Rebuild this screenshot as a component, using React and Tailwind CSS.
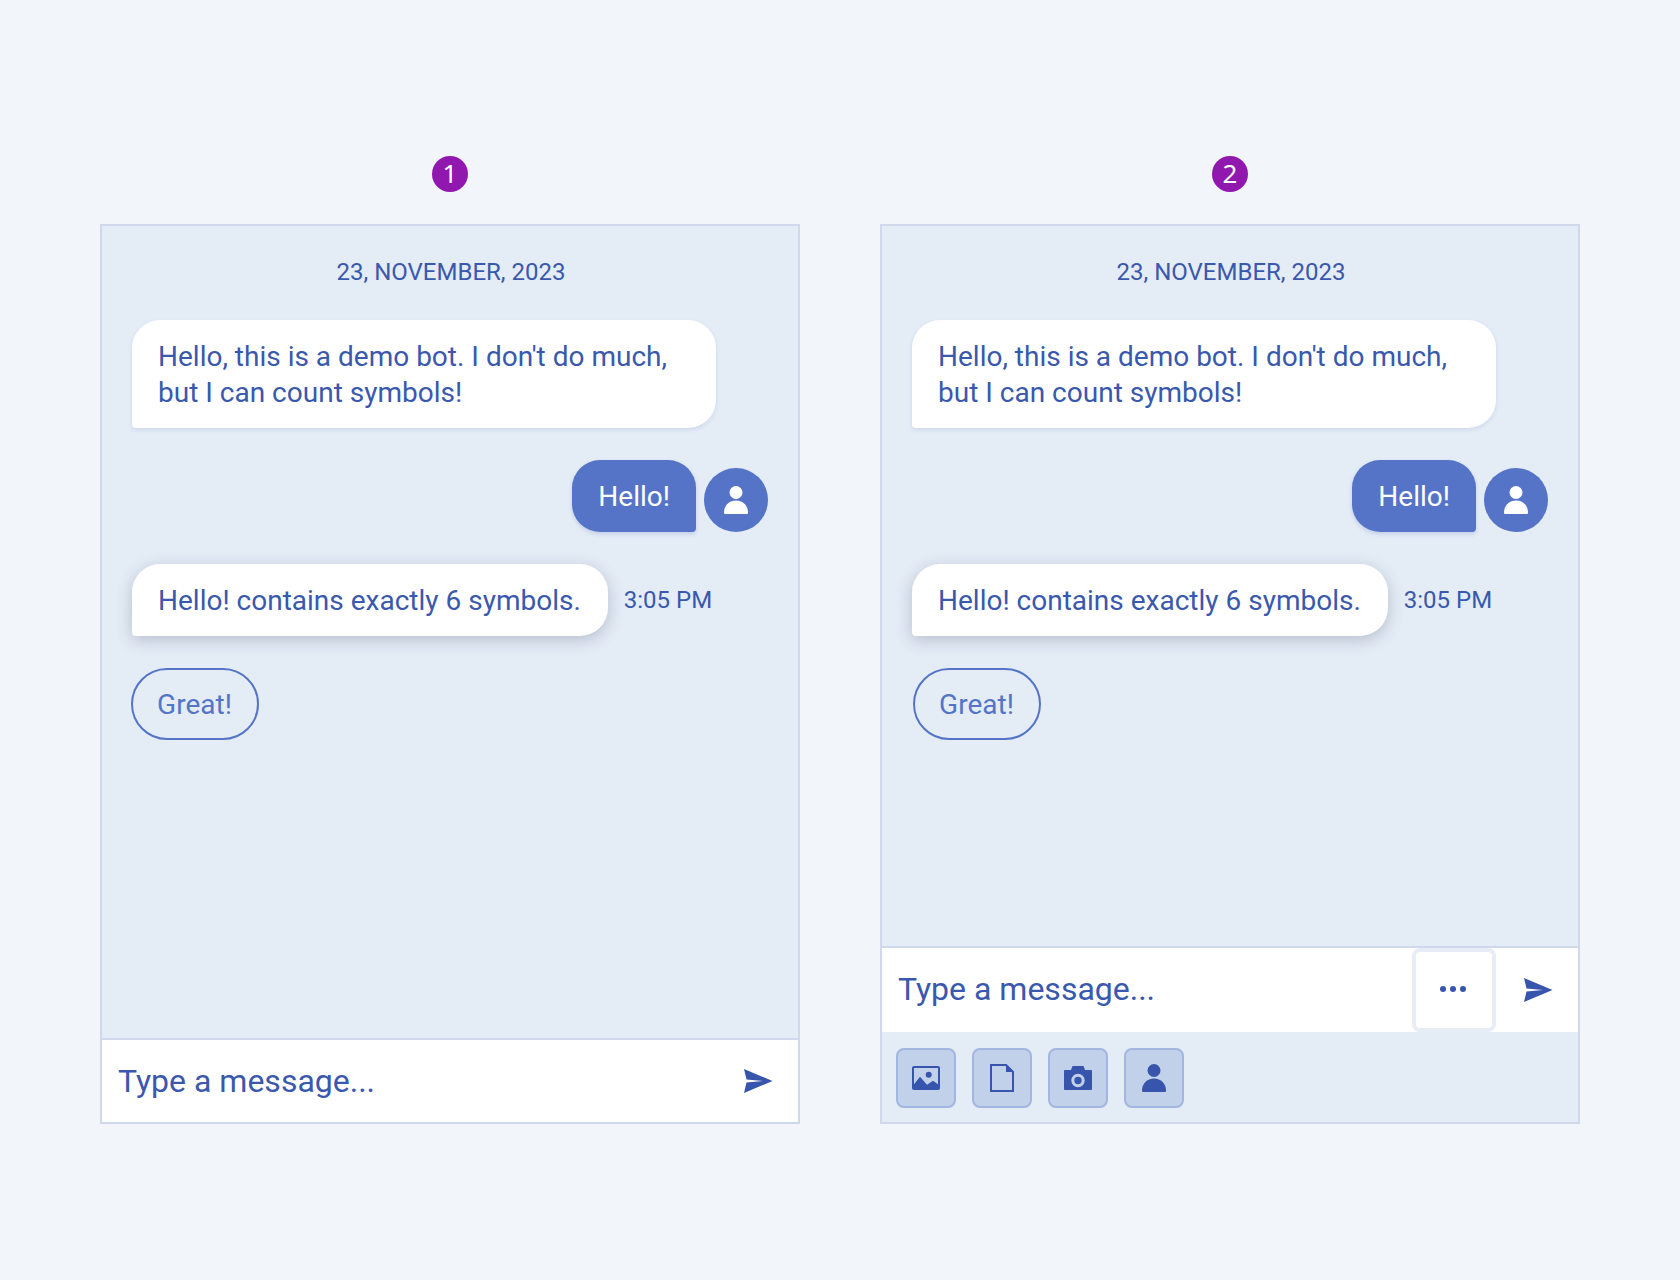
function SendIcon() {
  return (
    <svg width="28" height="24" viewBox="0 0 28 24" className="shrink-0 overflow-visible">
      <path d="M0 0L28.5 12L0 24L2.5 13.5L19 12L2.5 10.5Z" fill="#3755ad" />
    </svg>
  )
}

function PersonIcon({ color }) {
  return (
    <svg width="24" height="28" viewBox="0 0 24 28">
      <circle cx="12" cy="6.5" r="6.5" fill={color} />
      <path d="M0 26.5C0 19.5 5 14.5 12 14.5C19 14.5 24 19.5 24 26.5C24 27.5 23.5 28 22.5 28H1.5C0.5 28 0 27.5 0 26.5Z" fill={color} />
    </svg>
  )
}

function ImageIcon() {
  return (
    <svg width="28" height="24" viewBox="0 0 28 24">
      <rect x="1" y="1" width="26" height="22" rx="1" fill="none" stroke="#3755ad" strokeWidth="2" />
      <circle cx="16.7" cy="8.7" r="3" fill="#3755ad" />
      <path d="M1 19.5L8 10.7L15 18.7L21 14.7L27 19V23H1Z" fill="#3755ad" />
    </svg>
  )
}

function FileIcon() {
  return (
    <svg width="24" height="28" viewBox="0 0 24 28">
      <path d="M1 1H16L23 8V27H1Z" fill="none" stroke="#3755ad" strokeWidth="2" />
      <path d="M16 0L24 8H16Z" fill="#3755ad" />
    </svg>
  )
}

function CameraIcon() {
  return (
    <svg width="28" height="24" viewBox="0 0 28 24">
      <path d="M1 4H7L8.5 0H19.5L21 4H27C27.6 4 28 4.4 28 5V23C28 23.6 27.6 24 27 24H1C0.4 24 0 23.6 0 23V5C0 4.4 0.4 4 1 4Z" fill="#3755ad" />
      <circle cx="14" cy="14.5" r="5.2" fill="none" stroke="#c2d1ea" strokeWidth="3" />
    </svg>
  )
}

function ActionButton({ children }) {
  return (
    <button className="flex h-[60px] w-[60px] items-center justify-center rounded-lg border-2 border-[#a3b6df] bg-[#c2d1ea]">
      {children}
    </button>
  )
}

function ChatPanel({ number, withActions }) {
  return (
    <div className="flex w-[700px] flex-col items-center">
      <div className="mb-8 flex h-9 w-9 items-center justify-center rounded-full bg-[#9118ae] pb-0.5 font-['Noto_Sans',sans-serif] text-[26px] leading-none text-white">
        {number}
      </div>
      <div className="flex h-[900px] w-full flex-col border-2 border-[#d0d8ec] bg-[#e4ecf6] font-['Roboto',sans-serif] text-[#3a58ad]">
        <div className="flex flex-1 flex-col gap-8 px-[30px] pt-[30px]">
          <div className="pl-0.5 text-center text-2xl leading-8">23, NOVEMBER, 2023</div>

          <div className="w-[584px] rounded-[28px] rounded-bl-[4px] bg-white px-[26px] pt-[19px] pb-[17px] text-[28px] leading-9 shadow-[0_2px_4px_rgba(55,85,173,0.12)]">
            Hello, this is a demo bot. I don't do much, but I can count symbols!
          </div>

          <div className="flex items-end justify-end gap-2">
            <div className="rounded-[28px] rounded-br-[4px] bg-[#5574c8] px-[26px] pt-[19px] pb-[17px] text-[28px] leading-9 text-white shadow-[0_2px_4px_rgba(55,85,173,0.2)]">
              Hello!
            </div>
            <div className="flex h-16 w-16 items-center justify-center rounded-full bg-[#5574c8]">
              <PersonIcon color="#ffffff" />
            </div>
          </div>

          <div className="flex items-center gap-4">
            <div className="rounded-[28px] rounded-bl-[4px] bg-white pt-[19px] pr-[27px] pb-[17px] pl-[26px] text-[28px] leading-9 shadow-[0_4px_16px_rgba(50,60,90,0.26)]">
              Hello! contains exactly 6 symbols.
            </div>
            <span className="text-2xl leading-8">3:05 PM</span>
          </div>

          <button className={`${withActions ? 'ml-px' : '-ml-px'} h-[72px] w-32 rounded-[36px] border-2 border-[#5574c8] pt-0.5 pr-px text-[28px] text-[#5574c8]`}>
            Great!
          </button>
        </div>

        <div className={`flex ${withActions ? 'h-[86px]' : 'h-[84px]'} items-center border-t-2 border-[#d0d8ec] bg-white pr-[26px] pl-4`}>
          <span className={`flex-1 text-[32px] leading-10 ${withActions ? 'pb-0.5' : ''}`}>Type a message...</span>
          {withActions && (
            <button className="mr-7 flex h-[84px] w-[84px] items-center justify-center gap-1 rounded-lg border-4 border-[#e7ecf7] pr-0.5 pb-0.5">
              <span className="h-1.5 w-1.5 rounded-full bg-[#3755ad]" />
              <span className="h-1.5 w-1.5 rounded-full bg-[#3755ad]" />
              <span className="h-1.5 w-1.5 rounded-full bg-[#3755ad]" />
            </button>
          )}
          <SendIcon />
        </div>

        {withActions && (
          <div className="flex h-[90px] gap-4 px-3.5 pt-4">
            <ActionButton><ImageIcon /></ActionButton>
            <ActionButton><FileIcon /></ActionButton>
            <ActionButton><CameraIcon /></ActionButton>
            <ActionButton><PersonIcon color="#3755ad" /></ActionButton>
          </div>
        )}
      </div>
    </div>
  )
}

export default function App() {
  return (
    <div className="flex min-h-screen justify-center gap-20 bg-[#f2f6fb] pt-[156px]">
      <ChatPanel number={1} />
      <ChatPanel number={2} withActions />
    </div>
  )
}
